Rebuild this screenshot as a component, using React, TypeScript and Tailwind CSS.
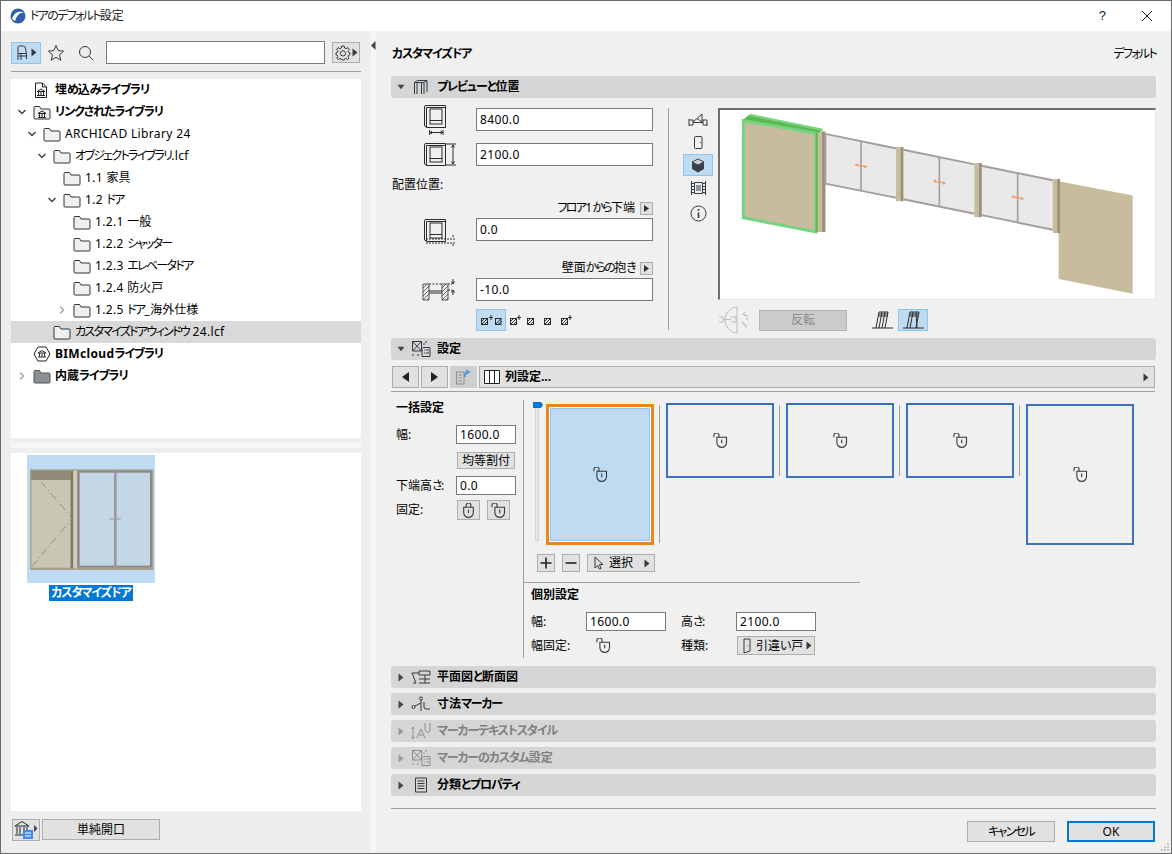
import type { ReactNode } from "react";

const INK = "#333a40";

const TREE = [
  { label: "埋め込みライブラリ", depth: 0, bold: true, chevron: "", icon: "doc" },
  { label: "リンクされたライブラリ", depth: 0, bold: true, chevron: "open", icon: "libfolder" },
  { label: "ARCHICAD Library 24", depth: 1, chevron: "open", icon: "folder" },
  { label: "オブジェクトライブラリ.lcf", depth: 2, chevron: "open", icon: "folder" },
  { label: "1.1 家具", depth: 3, chevron: "", icon: "folder" },
  { label: "1.2 ドア", depth: 3, chevron: "open", icon: "folder" },
  { label: "1.2.1 一般", depth: 4, chevron: "", icon: "folder" },
  { label: "1.2.2 シャッター", depth: 4, chevron: "", icon: "folder" },
  { label: "1.2.3 エレベータドア", depth: 4, chevron: "", icon: "folder" },
  { label: "1.2.4 防火戸", depth: 4, chevron: "", icon: "folder" },
  { label: "1.2.5 ドア_海外仕様", depth: 4, chevron: "closed", icon: "folder" },
  { label: "カスタマイズドアウィンドウ 24.lcf", depth: 2, chevron: "", icon: "folder", selected: true },
  { label: "BIMcloudライブラリ", depth: 0, bold: true, chevron: "", icon: "cloud" },
  { label: "内蔵ライブラリ", depth: 0, bold: true, chevron: "closed", icon: "solid" },
];

// the reference font has much narrower kana and slightly wider latin than Noto
function Jp({ text, bold }: { text: string; bold?: boolean }) {
  const parts = text.split(/([\u3040-\u30ff]+|[\u4e00-\u9fff]+)/).filter(Boolean);
  return (
    <>
      {parts.map((p, i) => {
        if (/[\u3040-\u30ff]/.test(p)) {
          return (
            <span key={i} className={bold ? "tracking-[-1.1px]" : "tracking-[-1.7px]"}>
              {p}
            </span>
          );
        }
        if (/[\u4e00-\u9fff]/.test(p)) return <span key={i}>{p}</span>;
        return (
          <span key={i} className="tracking-[0.35px]">
            {p}
          </span>
        );
      })}
    </>
  );
}

function Temple({ x, y }: { x: number; y: number }) {
  return (
    <path
      transform={`translate(${x} ${y})`}
      d="M0 3 L4 0.5 L8 3 Z M1.5 3.5 V6.5 M4 3.5 V6.5 M6.5 3.5 V6.5 M0 7 H8"
      fill="none"
      stroke="#222"
      strokeWidth="1"
    />
  );
}

function TreeIcon({ kind }: { kind: string }) {
  if (kind === "doc") {
    return (
      <svg width="18" height="17" viewBox="0 0 18 17">
        <path d="M2.5 1 H9.5 L13.5 5 V15.5 H2.5 Z M9.5 1 V5 H13.5" fill="#fff" stroke="#222" />
        <Temple x={4} y={6.5} />
      </svg>
    );
  }
  if (kind === "cloud") {
    return (
      <svg width="18" height="16" viewBox="0 0 18 16">
        <path d="M5 1 H13 L17 8 L13 15 H5 L1 8 Z" fill="#fff" stroke="#222" />
        <Temple x={5} y={4} />
      </svg>
    );
  }
  const solid = kind === "solid";
  return (
    <svg width="18" height="15" viewBox="0 0 18 15">
      <path
        d="M1 13 V2.5 Q1 1.5 2 1.5 H6.5 L8 4 H16 Q17 4 17 5 V13 Q17 14 16 14 H2 Q1 14 1 13 Z"
        fill={solid ? "#8b9095" : "#f0f0f0"}
        stroke={solid ? "#555" : "#2f3437"}
      />
      {kind === "libfolder" && <Temple x={5} y={5.5} />}
    </svg>
  );
}

function Chevron({ state }: { state: string }) {
  if (state === "open") {
    return (
      <svg width="10" height="10" viewBox="0 0 10 10">
        <path d="M1.5 3 L5 6.5 L8.5 3" fill="none" stroke="#444" strokeWidth="1.5" />
      </svg>
    );
  }
  if (state === "closed") {
    return (
      <svg width="10" height="10" viewBox="0 0 10 10">
        <path d="M3 1.5 L6.5 5 L3 8.5" fill="none" stroke="#a6a6a6" strokeWidth="1.5" />
      </svg>
    );
  }
  return null;
}

function Caret({ className = "" }: { className?: string }) {
  return (
    <svg width="6" height="9" viewBox="0 0 6 9" className={className}>
      <path d="M0.5 0.5 L5.5 4.5 L0.5 8.5 Z" fill="#3a3a3a" />
    </svg>
  );
}

function Lock({ open = true }: { open?: boolean }) {
  return (
    <svg width="15" height="15" viewBox="1 1 12 12.5" fill="none" stroke={INK} strokeWidth="0.9">
      {open ? (
        <>
          <path d="M1.5 4.5 V3 A2.2 2.2 0 0 1 5.8 2.5 L5.8 4.5" />
          <path d="M4 4.5 H12 V9 A4 4 0 0 1 4 9 Z" fill="none" />
          <path d="M8 6.5 V9.5" />
        </>
      ) : (
        <>
          <path d="M5 4.5 V3 A2 2 0 0 1 9 3 V4.5" />
          <path d="M3 4.5 H11 V9 A4 4 0 0 1 3 9 Z" />
          <path d="M7 6.5 V9.5" />
        </>
      )}
    </svg>
  );
}

function Btn({ className, children }: { className: string; children?: ReactNode }) {
  return (
    <div className={`flex items-center justify-center bg-[#e1e1e1] border border-[#adadad] ${className}`}>{children}</div>
  );
}

function Field({ value, className }: { value: string; className: string }) {
  return (
    <input
      readOnly
      value={value}
      className={`bg-white border border-[#7a7a7a] px-[3px] outline-none text-black tracking-[0.35px] ${className}`}
    />
  );
}

function DoorFrame({ mark }: { mark: "w" | "h" | "b" }) {
  return (
    <svg width="34" height="32" viewBox="0 0 34 32" fill="none" stroke="#2b2b2b" strokeWidth="1">
      <path d="M1.5 3 Q1.5 1.5 3 1.5 H22.5 V23.5 H4 L1.5 22 Z" />
      <path d="M3.5 3.5 H22.5 M3.5 3.5 V23.5" />
      <rect x="7" y="5" width="12" height="15" />
      <path d="M7 16.5 H19" />
      {mark === "w" && <path d="M6.5 26 V31 M20 26 V31 M7 28.5 H19.5 M7 28.5 L9 27 M7 28.5 L9 30 M19.5 28.5 L17.5 27 M19.5 28.5 L17.5 30" />}
      {mark === "h" && <path d="M23 2 H33 M23 23 H33 M30 3 V22 M30 3 L28.5 5.5 M30 3 L31.5 5.5 M30 22 L28.5 19.5 M30 22 L31.5 19.5" />}
      {mark === "b" && <path d="M3 21 H33 M3 25 H33 M30 17 V20 M30 26 V29" strokeDasharray="2 1" />}
    </svg>
  );
}

function RevealIcon() {
  return (
    <svg width="35" height="24" viewBox="0 0 35 24" fill="none" stroke="#2b2b2b" strokeWidth="1">
      <path d="M1 6 H7 V22 H1 Z M20 6 H26 V22 H20 Z" stroke="#555" />
      <path d="M1 10 L5 6 M1 14 L7 8 M1 18 L7 12 M1 22 L7 16 M5 22 L7 20 M20 10 L24 6 M20 14 L26 8 M20 18 L26 12 M20 22 L26 16 M24 22 L26 20" stroke="#444" strokeWidth="0.8" />
      <path d="M7 6 H20" strokeDasharray="2 1.5" />
      <path d="M7 13 H20 M7 15 H20" />
      <path d="M31 1 V6 M31 12 V17 M29.5 3.5 L31 6 L32.5 3.5 M29.5 14.5 L31 12 L32.5 14.5" />
      <path d="M26 6 H30 M26 12 H30" strokeDasharray="2 1" />
    </svg>
  );
}

function AnchorMark({ star, split }: { star?: boolean; split?: boolean }) {
  return (
    <svg width={split ? 22 : 14} height="12" viewBox={split ? "0 0 22 12" : "0 0 14 12"} fill="none" stroke="#2b2b2b">
      <rect x="1.5" y="4.5" width="6" height="6" />
      <path d="M1.5 10.5 L7.5 4.5 M1.5 7.5 L4.5 4.5 M4.5 10.5 L7.5 7.5" />
      {star && <path d={split ? "M11 1 V6 M9 3.5 H13" : "M10 1 V6 M8 3.5 H12"} />}
      {split && <rect x="15.5" y="4.5" width="5.5" height="6" />}
      {split && <path d="M15.5 10.5 L21 4.5 M18 10.5 L21 7.5" />}
    </svg>
  );
}

function SideIcon({ kind }: { kind: string }) {
  if (kind === "plan") {
    return (
      <svg width="20" height="16" viewBox="0 0 20 16" fill="none" stroke={INK}>
        <path d="M1 7 V14 M1 8 H5 V13 H1 M5 10.5 H15 M15 8 H19 V14 M15 8 V13 H19 M5 10 L14 2 V10 M9 6.5 L14 10" />
      </svg>
    );
  }
  if (kind === "door") {
    return (
      <svg width="12" height="15" viewBox="0 0 12 15" fill="none" stroke={INK}>
        <rect x="2.5" y="1.5" width="7.5" height="12" rx="1" />
        <path d="M8 7.5 H8.8" />
      </svg>
    );
  }
  if (kind === "cube") {
    return (
      <svg width="14" height="15" viewBox="0 0 14 15">
        <path d="M7 0.5 L13 3.5 V11 L7 14.5 L1 11 V3.5 Z" fill="#3a4046" />
        <path d="M7 1.5 L12 4 L7 6.5 L2 4 Z" fill="#c9ced3" />
      </svg>
    );
  }
  if (kind === "film") {
    return (
      <svg width="17" height="16" viewBox="0 0 17 16" fill="none" stroke={INK}>
        <path d="M1.5 1 V15 M15.5 1 V15 M1 3.5 H4 M1 6.5 H4 M1 9.5 H4 M1 12.5 H4 M13 3.5 H16 M13 6.5 H16 M13 9.5 H16 M13 12.5 H16 M4.5 2.5 H12.5 V13.5 H4.5 Z M6 6 H11 M6 8 H11 M6 10 H11" />
      </svg>
    );
  }
  return (
    <svg width="17" height="17" viewBox="0 0 17 17" fill="none" stroke={INK}>
      <circle cx="8.5" cy="8.5" r="7.5" />
      <path d="M8.5 7.5 V13" strokeWidth="1.6" />
      <path d="M8.5 4 V5.6" strokeWidth="1.8" />
    </svg>
  );
}

function Preview3D() {
  const rails = [
    { x1: 466, x2: 680, top: 132, topEnd: 176, bottom: 282, bottomEnd: 325, mx: 573, my1: 155, my2: 302, ay: 228 },
    { x1: 700, x2: 914, top: 180, topEnd: 224, bottom: 329, bottomEnd: 373, mx: 808, my1: 203, my2: 350, ay: 277 },
    { x1: 935, x2: 1148, top: 228, topEnd: 272, bottom: 377, bottomEnd: 421, mx: 1043, my1: 250, my2: 398, ay: 324 },
  ];
  const posts = [
    { x: 678, y1: 172, y2: 335 },
    { x: 913, y1: 220, y2: 383 },
    { x: 1148, y1: 268, y2: 431 },
  ];
  return (
    <svg viewBox="150 60 1305 570" className="w-full h-full block" preserveAspectRatio="none">
      <path d="M1166 275 L1388 318 V614 L1166 570 Z" fill="#c8bc9f" />
      <path d="M442 125 L466 125 V428 H442 Z" fill="#c8bc9f" />
      <path d="M456 125 H466 V428 H456 Z" fill="#9c917c" />
      {rails.map((r) => (
        <g key={r.x1}>
          <path d={`M${r.x1} ${r.top} L${r.x2} ${r.topEnd} V${r.bottomEnd} L${r.x1} ${r.bottom} Z`} fill="#e9e9e9" />
          <path d={`M${r.x1} ${r.top} L${r.x2} ${r.topEnd} M${r.x1} ${r.bottom} L${r.x2} ${r.bottomEnd}`} stroke="#a49e9e" strokeWidth="6" />
          <path d={`M${r.mx} ${r.my1} V${r.my2}`} stroke="#a49e9e" strokeWidth="5" />
          <path d={`M${r.mx - 17} ${r.ay - 2} L${r.mx + 17} ${r.ay + 3}`} stroke="#f59a5e" strokeWidth="4" />
          <path d={`M${r.mx - 19} ${r.ay - 3} l9 -5 v10 Z M${r.mx + 19} ${r.ay + 4} l-9 -5 v10 Z`} fill="#f59a5e" />
        </g>
      ))}
      <path d="M466 130 V282" stroke="#a49e9e" strokeWidth="6" />
      {posts.map((p) => (
        <g key={p.x}>
          <rect x={p.x} y={p.y1} width="22" height={p.y2 - p.y1} fill="#c8bc9f" />
          <rect x={p.x + 14} y={p.y1} width="8" height={p.y2 - p.y1} fill="#9c917c" />
        </g>
      ))}
      <path d="M222 95 L438 130 V428 L218 385 Z" fill="#c8bc9f" />
      <path d="M218 90 L240 73 L458 118 L440 135 Z" fill="#5cb84f" />
      <path d="M240 75 L458 120" stroke="#77d681" strokeWidth="7" />
      <path d="M220 92 L438 130 V428 L220 385 Z" fill="none" stroke="#74d47f" strokeWidth="9" />
      <path d="M440 130 V428" stroke="#5cb84f" strokeWidth="6" />
    </svg>
  );
}

function Thumb() {
  return (
    <svg viewBox="81 75 384 384" className="w-[128px] h-[128px] block bg-[#bedbf1]">
      <rect x="90" y="118" width="370" height="302" fill="#a8a28a" />
      <rect x="94" y="150" width="118" height="263" fill="#c8c6b4" />
      <rect x="94" y="122" width="118" height="28" fill="#8f8975" />
      <rect x="212" y="122" width="8" height="293" fill="#7f7a68" />
      <rect x="220" y="122" width="12" height="293" fill="#d0ccb8" />
      <rect x="232" y="122" width="224" height="290" fill="#8a8785" />
      <rect x="239" y="128" width="103" height="279" fill="#c2d6e6" />
      <rect x="349" y="128" width="101" height="279" fill="#c2d6e6" />
      <rect x="342" y="122" width="7" height="288" fill="#9b98a0" />
      <path d="M94 122 L217 265 L94 412" fill="none" stroke="#8d8874" strokeWidth="2.5" strokeDasharray="24 8 4 8" />
      <path d="M328 267 H362" stroke="#999" strokeWidth="3" />
    </svg>
  );
}

function SectionBar({ label, open, disabled, icon }: { label: string; open?: boolean; disabled?: boolean; icon: ReactNode }) {
  return (
    <div className="h-[22px] shrink-0 flex items-center bg-[#d5d5d5] rounded-[3px] pl-[6px]">
      <div className="w-[8px] flex justify-center">
        {open ? (
          <svg width="9" height="6" viewBox="0 0 9 6">
            <path d="M0.5 0.5 H8.5 L4.5 5.5 Z" fill="#444" />
          </svg>
        ) : (
          <svg width="6" height="9" viewBox="0 0 6 9">
            <path d="M0.5 0.5 L5.5 4.5 L0.5 8.5 Z" fill={disabled ? "#9a9a9a" : "#444"} />
          </svg>
        )}
      </div>
      <div className="w-[20px] ml-[6px] flex justify-center">{icon}</div>
      <span className={`ml-[6px] font-bold ${disabled ? "text-[#808080]" : "text-black"}`}>
        <Jp text={label} bold />
      </span>
    </div>
  );
}

function BarGlyph({ kind, dim }: { kind: string; dim?: boolean }) {
  const c = dim ? "#8f8f8f" : INK;
  const common = { fill: "none", stroke: c, strokeWidth: 1 };
  if (kind === "frame") {
    return (
      <svg width="16" height="16" viewBox="0 0 16 16" {...common}>
        <path d="M1.5 15 V3.5 L4.5 1.5 H14 V13 M1.5 3.5 H11 V15 M4 4 V15 M8.5 4 V15 M11 3.5 L14 1.5" />
      </svg>
    );
  }
  if (kind === "settings") {
    return (
      <svg width="20" height="18" viewBox="0 0 20 18" {...common}>
        <path d="M1.5 1.5 H10.5 V11 H1.5 Z M1.5 1.5 L10.5 11 M10.5 1.5 L1.5 11 M1 15 H3 M6 15 H8 M12 4 H14 M15 1 V3 M12 7.5 H19 V16.5 H11 V7.5 M13 10 H14 M15 10 H18 M13 13 H14 M15 13 H18" />
      </svg>
    );
  }
  if (kind === "plan") {
    return (
      <svg width="20" height="14" viewBox="0 0 20 14" {...common}>
        <path d="M2 13 H5 L1 3 H8 M8 1 H19 V5 H8 Z M14 5 V13 M8 9 H19 M8 13 H19" />
      </svg>
    );
  }
  if (kind === "dim") {
    return (
      <svg width="20" height="16" viewBox="0 0 20 16" {...common}>
        <circle cx="10" cy="2.5" r="1.5" />
        <circle cx="2.5" cy="11" r="1.5" />
        <path d="M10 4 V15 M4 10 L10 7 M13 6 V11 A2 2 0 0 0 15 13 H19" />
      </svg>
    );
  }
  if (kind === "text") {
    return (
      <svg width="20" height="18" viewBox="0 0 20 18" {...common}>
        <path d="M2 6 V16 M1 7 L2 5 L3 7 M1 15 L2 17 L3 15 M6 16 L10 7 L14 16 M7.5 13 H12.5 M14 1 V8 L17 11 L19 8 V1" />
      </svg>
    );
  }
  return (
    <svg width="14" height="16" viewBox="0 0 14 16" {...common}>
      <path d="M1.5 1 H12.5 V15 H1.5 Z M3.5 4 H10.5 M3.5 6.5 H10.5 M3.5 9 H10.5 M3.5 11.5 H10.5" />
    </svg>
  );
}

function Pane({ tall, active }: { tall?: boolean; active?: boolean }) {
  if (active) {
    return (
      <div className="w-[108px] h-[141px] mt-[1px] border-[3px] border-[#f0821e] bg-white p-px">
        <div className="w-full h-full bg-[#bedbf1] border border-[#90c5f0] flex items-center justify-center">
          <Lock />
        </div>
      </div>
    );
  }
  return (
    <div className={`w-[108px] border-2 border-[#3a73b9] flex items-center justify-center ${tall ? "h-[141px] mt-[1px]" : "h-[75px]"}`}>
      <Lock />
    </div>
  );
}

export default function App() {
  return (
    <div className="relative w-[1172px] h-[854px] flex flex-col overflow-hidden border border-[#6b6b6b] bg-[#f0f0f0] text-black text-[12px] font-['Noto_Sans','Noto_Sans_CJK_JP',sans-serif] [font-feature-settings:'palt']">
      {/* title bar */}
      <div className="h-[30px] shrink-0 bg-white flex items-center pl-[9px]">
        <svg width="16" height="16" viewBox="0 0 16 16">
          <circle cx="8" cy="8" r="7.5" fill="#2f5fa8" />
          <path d="M2 11 C4 4 10 2 14 5 C10 4 7 7 5 13 Z" fill="#fff" />
        </svg>
        <span className="ml-[4px] text-[#222]">
          <Jp text="ドアのデフォルト設定" />
        </span>
        <span className="ml-auto mr-[35px] text-[13px] font-['Liberation_Sans',sans-serif] text-[#222]">?</span>
        <svg width="12" height="12" viewBox="0 0 12 12" className="mr-[18px]">
          <path d="M1 1 L11 11 M11 1 L1 11" stroke="#222" strokeWidth="1" />
        </svg>
      </div>

      <div className="flex-1 flex min-h-0">
        {/* library browser */}
        <div className="w-[370px] shrink-0 pl-[10px] pr-[10px] pt-[10px] flex flex-col bg-[#eeeeee]">
          <div className="h-[23px] flex items-center">
            <div className="w-[30px] h-[22px] bg-[#bedbf1] border border-[#90c5f0] flex items-center justify-center gap-[2px]">
              <svg width="14" height="16" viewBox="0 0 14 16" fill="none" stroke={INK}>
                <path d="M3 15 V2.5 Q3 1 4.5 1 H8.5 Q10 1 10.3 3 L11.5 8.5 H3 M6 8.5 V15 M11.5 8.5 V14 M3.5 11 H11.5" />
              </svg>
              <Caret />
            </div>
            <svg width="18" height="18" viewBox="0 0 18 18" className="ml-[6px]" fill="none" stroke={INK}>
              <path d="M9 1.5 L11.2 6.6 L16.7 7.1 L12.5 10.7 L13.8 16.2 L9 13.3 L4.2 16.2 L5.5 10.7 L1.3 7.1 L6.8 6.6 Z" />
            </svg>
            <svg width="16" height="16" viewBox="0 0 16 16" className="ml-[13px]" fill="none" stroke={INK}>
              <circle cx="7" cy="7" r="5.5" />
              <path d="M11 11 L15 15" />
            </svg>
            <input readOnly className="ml-[12px] w-[219px] h-[23px] bg-white border border-[#7a7a7a] outline-none" />
            <div className="ml-[7px] w-[28px] h-[21px] bg-[#e1e1e1] border border-[#adadad] flex items-center justify-center gap-[1px]">
              <svg width="16" height="16" viewBox="0 0 16 16" fill="none" stroke={INK}>
                <path d="M6.8 1 H9.2 L9.6 3 L11.2 3.7 L13 2.6 L14.4 4.4 L13 5.8 L13.4 7.2 L15 7.8 V9.8 L13.4 10.4 L13 11.6 L14 13.2 L12.4 14.6 L10.8 13.4 L9.4 14 L9.2 15 H6.8 L6.4 14 L5 13.4 L3.4 14.6 L1.8 13.2 L2.8 11.6 L2.4 10.4 L1 9.8 V7.8 L2.6 7.2 L3 5.8 L1.6 4.4 L3 2.6 L4.8 3.7 L6.4 3 Z" />
                <circle cx="8" cy="8.4" r="2.6" />
              </svg>
              <Caret />
            </div>
          </div>
          <div className="h-px bg-[#a0a0a0] mt-[7px] shrink-0" />
          <div className="h-[359px] mt-[7px] bg-white shrink-0">
            <div className="-mt-[1px] pt-px">
              {TREE.map((t) => (
                <div
                  key={t.label}
                  className={`h-[22px] flex items-center ${t.selected ? "bg-[#d9d9d9]" : ""}`}
                  style={{ paddingLeft: 6 + t.depth * 10 }}
                >
                  <div className="w-[10px] flex justify-center shrink-0">
                    <Chevron state={t.chevron} />
                  </div>
                  <div className="w-[18px] ml-[6px] flex justify-center shrink-0">
                    <TreeIcon kind={t.icon} />
                  </div>
                  <span className={`ml-[4px] whitespace-nowrap ${t.bold ? "font-bold" : ""}`}>
                    <Jp text={t.label} bold={t.bold} />
                  </span>
                </div>
              ))}
            </div>
          </div>
          <div className="h-[15px] shrink-0 flex items-center">
            <div className="h-[5px] w-full bg-[#f7f7f7]" />
          </div>
          <div className="h-[358px] shrink-0 bg-white pl-[16px] pt-[2px]">
            <div className="w-[128px] flex flex-col items-center">
              <Thumb />
              <span className="mt-[2px] h-[16px] leading-[16px] px-[2px] bg-[#0078d7] text-white font-bold whitespace-nowrap">
                <Jp text="カスタマイズドア" bold />
              </span>
            </div>
          </div>
          <div className="mt-[8px] flex h-[22px]">
            <div className="ml-[1px] w-[28px] h-[22px] bg-[#e1e1e1] border border-[#adadad] flex items-center justify-center">
              <svg width="24" height="20" viewBox="0 0 24 20" fill="none">
                <path d="M1 6 L8 1.5 L15 6 Z M3 7 V14 M6 7 V14 M10 7 V14 M13 7 V14 M1 15 H15" stroke="#222" />
                <rect x="9" y="10" width="10" height="9" fill="#3d8bf0" />
                <path d="M11 13 H17 M11 16 H17" stroke="#fff" />
                <path d="M20 5 L23.5 8.5 L20 12 Z" fill="#444" />
              </svg>
            </div>
            <Btn className="ml-[2px] w-[118px] h-[21px]">単純開口</Btn>
          </div>
        </div>

        {/* collapse strip */}
        <div className="w-[5px] shrink-0 bg-[#f7f7f7] pt-[10px]">
          <svg width="5" height="9" viewBox="0 0 5 9">
            <path d="M4.5 0 V9 L0 4.5 Z" fill="#444" />
          </svg>
        </div>

        {/* settings */}
        <div className="flex-1 min-w-0 pl-[15px] pr-[15px] flex flex-col">
          <div className="h-[45px] shrink-0 flex items-center justify-between pl-[1px]">
            <span className="font-bold">
              <Jp text="カスタマイズドア" bold />
            </span>
            <span>
              <Jp text="デフォルト" />
            </span>
          </div>
          <SectionBar open label="プレビューと位置" icon={<BarGlyph kind="frame" />} />

          <div className="h-[240px] shrink-0 pt-[10px] flex">
            <div className="w-[278px] h-[222px] shrink-0 border-r border-[#a0a0a0] flex flex-col">
              <div className="flex h-[23px] items-center pl-[32px] mb-[12px]">
                <div className="w-[34px]"><DoorFrame mark="w" /></div>
                <Field value="8400.0" className="ml-[19px] w-[177px] h-[23px]" />
              </div>
              <div className="flex h-[23px] items-center pl-[32px]">
                <div className="w-[34px] translate-y-[3px]"><DoorFrame mark="h" /></div>
                <Field value="2100.0" className="ml-[19px] w-[177px] h-[23px]" />
              </div>
              <div className="h-[18px] mt-[10px] flex items-center pl-px">配置位置:</div>
              <div className="h-[14px] mt-[7px] w-[262px] flex items-center justify-end gap-[5px]">
                <span><Jp text="フロア1から下端" /></span>
                <Btn className="w-[13px] h-[13px]"><svg width="5" height="7" viewBox="0 0 5 7"><path d="M0 0 L5 3.5 L0 7 Z" fill="#333" /></svg></Btn>
              </div>
              <div className="flex h-[23px] items-center pl-[32px] mt-[3px]">
                <div className="w-[34px] translate-y-[4px]"><DoorFrame mark="b" /></div>
                <Field value="0.0" className="ml-[19px] w-[177px] h-[23px]" />
              </div>
              <div className="h-[14px] mt-[20px] w-[262px] flex items-center justify-end gap-[5px]">
                <span><Jp text="壁面からの抱き" /></span>
                <Btn className="w-[13px] h-[13px]"><svg width="5" height="7" viewBox="0 0 5 7"><path d="M0 0 L5 3.5 L0 7 Z" fill="#333" /></svg></Btn>
              </div>
              <div className="flex h-[23px] items-center pl-[31px] mt-[3px]">
                <div className="w-[35px]"><RevealIcon /></div>
                <Field value="-10.0" className="ml-[19px] w-[177px] h-[23px]" />
              </div>
              <div className="flex items-center h-[22px] mt-[8px] pl-[85px]">
                <div className="w-[30px] h-[22px] bg-[#bedbf1] border border-[#90c5f0] flex items-center justify-center">
                  <AnchorMark star split />
                </div>
                <div className="ml-[3px] flex items-center gap-[3px]">
                  <AnchorMark star />
                  <AnchorMark />
                  <AnchorMark />
                  <AnchorMark star />
                </div>
              </div>
            </div>

            <div className="w-[30px] ml-[14px] shrink-0 flex flex-col">
              <div className="h-[23px] flex items-center justify-center"><SideIcon kind="plan" /></div>
              <div className="h-[23px] flex items-center justify-center"><SideIcon kind="door" /></div>
              <div className="h-[22px] bg-[#bedbf1] border border-[#90c5f0] flex items-center justify-center"><SideIcon kind="cube" /></div>
              <div className="h-[23px] flex items-center justify-center"><SideIcon kind="film" /></div>
              <div className="h-[23px] mt-[3px] flex items-center justify-center"><SideIcon kind="info" /></div>
            </div>

            <div className="ml-[5px] flex-1 min-w-0">
              <div className="h-[192px] bg-white border-t-2 border-l-2 border-t-[#6e6e6e] border-l-[#6e6e6e] border-r border-b border-r-[#e4e4e4] border-b-[#e4e4e4]">
                <Preview3D />
              </div>
              <div className="h-[22px] mt-[9px] flex items-center">
                <svg width="34" height="28" viewBox="0 0 34 28" fill="none" stroke="#bdbdbd">
                  <path d="M19 1 A12 13 0 0 0 19 27 V1 M1 11 H5 V16 H1 M13 11 H18 V16 H13 M5 13.5 H13" />
                  <path d="M27 8 A5 5 0 0 1 29 14 M27 20 A5 5 0 0 1 25 15 M27 6 L25 8 L28 10 M27 22 L29 20 L26 18" />
                </svg>
                <div className="ml-[7px] w-[88px] h-[21px] flex items-center justify-center bg-[#cbcbcb] border border-[#b5b5b5] text-[#8a8a8a]">反転</div>
                <div className="ml-[25px] w-[21px] flex justify-center">
                  <svg width="21" height="18" viewBox="0 0 21 18" fill="none" stroke="#2b2b2b">
                    <path d="M0 17 H21 M7 1 H16 L13 17 M7 1 L4 17 M10 1 L7 17 M13 1 L10 17 M7 3 H16 M7 5 H15.5" />
                  </svg>
                </div>
                <div className="ml-[5px] w-[30px] h-[22px] bg-[#bedbf1] border border-[#90c5f0] flex items-center justify-center">
                  <svg width="21" height="18" viewBox="0 0 21 18" fill="none" stroke="#2b2b2b">
                    <path d="M0 17 H21 M7 1 H16 L13 17 M7 1 L4 17 M10 1 L7 17 M13 1 L14 17 M7 3 H16 M7 5 H16" />
                  </svg>
                </div>
              </div>
            </div>
          </div>

          <SectionBar open label="設定" icon={<BarGlyph kind="settings" />} />

          <div className="h-[22px] shrink-0 mt-[6px] flex pl-px pr-px">
            <Btn className="w-[27px] h-[22px]">
              <svg width="7" height="10" viewBox="0 0 7 10"><path d="M7 0 V10 L0 5 Z" fill="#222" /></svg>
            </Btn>
            <Btn className="ml-[2px] w-[27px] h-[22px]">
              <svg width="7" height="10" viewBox="0 0 7 10"><path d="M0 0 V10 L7 5 Z" fill="#222" /></svg>
            </Btn>
            <div className="ml-[2px] w-[27px] h-[22px] bg-[#cfcfcf] flex items-center justify-center">
              <svg width="18" height="16" viewBox="0 0 18 16" fill="none" stroke="#8f8f8f">
                <path d="M1.5 3 H9 V15 H1.5 Z M3.5 6 H7 M3.5 9 H7 M3.5 12 H7" />
                <path d="M10 8 V5 Q10 3 13 3 M11 1 L14 3 L11 5" stroke="#5a9fd8" strokeWidth="2" />
              </svg>
            </div>
            <div className="ml-[2px] flex-1 h-[22px] bg-[#e1e1e1] border border-[#adadad] flex items-center pl-[4px] pr-[5px]">
              <svg width="16" height="14" viewBox="0 0 16 14" fill="#fff" stroke="#222">
                <path d="M0.5 0.5 H15.5 V13.5 H0.5 Z M5.5 0.5 V13.5 M10.5 0.5 V13.5" />
              </svg>
              <span className="ml-[5px] font-bold">列設定...</span>
              <Caret className="ml-auto" />
            </div>
          </div>
          <div className="h-px bg-[#a0a0a0] mt-[3px] mr-px shrink-0" />

          <div className="h-[258px] mt-[8px] shrink-0 flex">
            <div className="w-[133px] shrink-0 border-r border-[#a0a0a0] relative flex flex-col pl-[5px]">
              <div className="h-[16px] flex items-center font-bold">一括設定</div>
              <div className="flex items-center mt-[9px] h-[19px]">
                <span className="w-[60px]">幅:</span>
                <Field value="1600.0" className="w-[60px] h-[19px]" />
              </div>
              <Btn className="ml-[61px] mt-[8px] w-[58px] h-[17px]">均等割付</Btn>
              <div className="flex items-center mt-[7px] h-[19px]">
                <span className="w-[60px]"><Jp text="下端高さ:" /></span>
                <Field value="0.0" className="w-[60px] h-[19px]" />
              </div>
              <div className="flex items-center mt-[5px] h-[20px]">
                <span className="w-[61px]">固定:</span>
                <Btn className="w-[23px] h-[20px]"><Lock open={false} /></Btn>
                <Btn className="ml-[7px] w-[23px] h-[20px]"><Lock /></Btn>
              </div>
            </div>

            <div className="flex-1 min-w-0 flex flex-col">
              <div className="h-[145px] pt-[3px] pl-[9px] flex items-start shrink-0">
                <div className="w-[10px] h-[139px] relative shrink-0 mr-[3px]">
                  <div className="absolute left-[2px] top-[4px] w-[4px] h-[134px] bg-[#e6e6e6] border border-[#d4d4d4]" />
                  <svg width="10" height="6" viewBox="0 0 10 6" className="absolute left-0 top-[-1px]">
                    <path d="M0 0 H8 L10 3 L8 6 H0 Z" fill="#0078d7" />
                  </svg>
                </div>
                <Pane active />
                <div className="w-px h-[138px] mt-[2px] ml-[5px] mr-[6px] bg-[#a0a0a0]" />
                <Pane />
                <div className="w-px h-[71px] mt-[2px] ml-[5px] mr-[6px] bg-[#a0a0a0]" />
                <Pane />
                <div className="w-px h-[71px] mt-[2px] ml-[5px] mr-[6px] bg-[#a0a0a0]" />
                <Pane />
                <div className="w-px h-[71px] mt-[2px] ml-[5px] mr-[6px] bg-[#a0a0a0]" />
                <Pane tall />
              </div>
              <div className="h-[18px] mt-[9px] pl-[13px] flex shrink-0">
                <Btn className="w-[18px] h-[18px]">
                  <svg width="12" height="12" viewBox="0 0 12 12"><path d="M6 0.5 V11.5 M0.5 6 H11.5" stroke="#222" strokeWidth="1.6" /></svg>
                </Btn>
                <Btn className="ml-[7px] w-[18px] h-[18px]">
                  <svg width="12" height="12" viewBox="0 0 12 12"><path d="M0.5 6 H11.5" stroke="#222" strokeWidth="1.6" /></svg>
                </Btn>
                <div className="ml-[7px] w-[68px] h-[18px] bg-[#e1e1e1] border border-[#adadad] flex items-center pl-[6px] pr-[4px]">
                  <svg width="10" height="14" viewBox="0 0 10 14" fill="none" stroke={INK}>
                    <path d="M1 1 L9 8.5 H5.5 L7 12.5 L5.2 13 L3.8 9.5 L1 12 Z" />
                  </svg>
                  <span className="ml-[5px]">選択</span>
                  <Caret className="ml-auto" />
                </div>
              </div>
              <div className="h-px w-[337px] -ml-px bg-[#a0a0a0] mt-[10px] shrink-0" />
              <div className="h-[24px] pl-[7px] flex items-center font-bold shrink-0">個別設定</div>
              <div className="mt-[5px] h-[19px] pl-[7px] flex items-center shrink-0">
                <span className="w-[55px]">幅:</span>
                <Field value="1600.0" className="w-[80px] h-[19px]" />
                <span className="ml-[15px] w-[55px]"><Jp text="高さ:" /></span>
                <Field value="2100.0" className="w-[80px] h-[19px]" />
              </div>
              <div className="mt-[5px] h-[19px] pl-[7px] flex items-center shrink-0">
                <span className="w-[65px]">幅固定:</span>
                <div className="w-[70px]"><Lock /></div>
                <span className="ml-[15px] w-[56px]">種類:</span>
                <div className="w-[78px] h-[19px] bg-[#e1e1e1] border border-[#adadad] flex items-center pl-[5px] pr-[2px]">
                  <svg width="8" height="16" viewBox="0 0 8 16" fill="none" stroke={INK}>
                    <path d="M1 1 H7 V13 L1 15 Z M4.5 8 H5.2" />
                  </svg>
                  <span className="ml-[5px] whitespace-nowrap">引違い戸</span>
                  <Caret className="ml-auto" />
                </div>
              </div>
            </div>
          </div>

          <div className="mt-[8px] flex flex-col gap-[5px] shrink-0">
            <SectionBar label="平面図と断面図" icon={<BarGlyph kind="plan" />} />
            <SectionBar label="寸法マーカー" icon={<BarGlyph kind="dim" />} />
            <SectionBar disabled label="マーカーテキストスタイル" icon={<BarGlyph kind="text" dim />} />
            <SectionBar disabled label="マーカーのカスタム設定" icon={<BarGlyph kind="settings" dim />} />
            <SectionBar label="分類とプロパティ" icon={<BarGlyph kind="list" />} />
          </div>
          <div className="h-px bg-[#a0a0a0] mt-[12px] shrink-0" />
          <div className="mt-[12px] flex justify-end pr-px gap-[12px] shrink-0">
            <Btn className="w-[88px] h-[21px]"><Jp text="キャンセル" /></Btn>
            <div className="w-[88px] h-[21px] flex items-center justify-center bg-[#e1e1e1] border-2 border-[#0078d7]">OK</div>
          </div>
        </div>
      </div>

      {/* resize grip */}
      <svg width="10" height="10" viewBox="0 0 10 10" className="absolute right-[1px] bottom-[1px]">
        <path d="M7 1 H9 V3 H7 Z M4 4 H6 V6 H4 Z M7 4 H9 V6 H7 Z M1 7 H3 V9 H1 Z M4 7 H6 V9 H4 Z M7 7 H9 V9 H7 Z" fill="#c4c4c4" />
      </svg>
    </div>
  );
}
